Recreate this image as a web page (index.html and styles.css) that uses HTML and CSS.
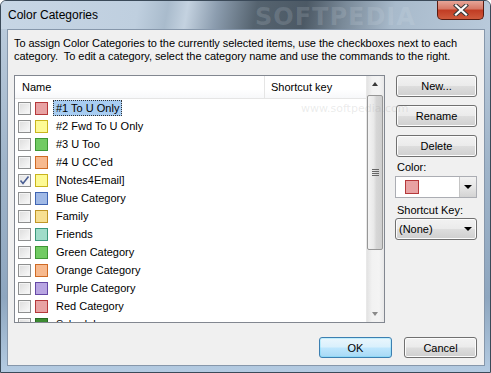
FILE: index.html
```html
<!DOCTYPE html>
<html lang="en">
<head>
<meta charset="UTF-8" />
<title>Color Categories</title>
<link rel="stylesheet" href="styles.css">
</head>
<body>

<div class="window">
  <div class="titlebar">
    <span class="title">Color Categories</span>
    <span class="watermark">SOFTPEDIA</span>
    <div class="close-btn">
      <svg width="16" height="12" viewBox="0 0 16 12">
        <path d="M3 1.5 L13 10.5 M13 1.5 L3 10.5" stroke="#3a3a3a" stroke-width="4.2" stroke-linecap="square"/>
        <path d="M3 1.5 L13 10.5 M13 1.5 L3 10.5" stroke="#fff" stroke-width="2.2" stroke-linecap="square"/>
      </svg>
    </div>
  </div>

  <div class="client">
    <p class="intro">To assign Color Categories to the currently selected items, use the checkboxes next to each<br>category.&nbsp; To edit a category, select the category name and use the commands to the right.</p>

    <div class="main">
      <div class="listbox">
        <div class="list-cols">
          <div class="list-head">
            <span class="col-name">Name</span>
            <span class="col-key">Shortcut key</span>
          </div>
          <ul class="rows" id="rows"></ul>
        </div>
        <div class="scrollbar">
          <div class="sb-arrow up"></div>
          <div class="sb-track">
            <div class="sb-thumb"><span class="grip"></span></div>
          </div>
          <div class="sb-arrow down"></div>
        </div>
      </div>

      <div class="side">
        <button class="btn">New...</button>
        <button class="btn">Rename</button>
        <button class="btn">Delete</button>
        <label class="field-label">Color:</label>
        <div class="color-combo">
          <span class="color-value"><span class="swatch red"></span></span>
          <span class="combo-arrow"></span>
        </div>
        <label class="field-label">Shortcut Key:</label>
        <div class="key-combo">
          <span>(None)</span>
          <span class="key-arrow"></span>
        </div>
      </div>
    </div>

    <div class="footer">
      <button class="btn btn-default">OK</button>
      <button class="btn">Cancel</button>
    </div>
  </div>

  <span class="wm wm-url">www.softpedia.com</span>
</div>

<script>
  const categorias = [
    { nombre: '#1 To U Only', color: 'red', sel: true },
    { nombre: '#2 Fwd To U Only', color: 'yellow' },
    { nombre: '#3 U Too', color: 'green' },
    { nombre: '#4 U CC\u2019ed', color: 'orange' },
    { nombre: '[Notes4Email]', color: 'yellow', checked: true },
    { nombre: 'Blue Category', color: 'blue' },
    { nombre: 'Family', color: 'peach' },
    { nombre: 'Friends', color: 'teal' },
    { nombre: 'Green Category', color: 'green' },
    { nombre: 'Orange Category', color: 'orange' },
    { nombre: 'Purple Category', color: 'purple' },
    { nombre: 'Red Category', color: 'red' },
    { nombre: 'Schedule', color: 'darkgreen' }
  ];

  const rowsEl = document.getElementById('rows');
  categorias.forEach(c => {
    const li = document.createElement('li');
    li.className = 'row';
    li.innerHTML = `
      <span class="check${c.checked ? ' checked' : ''}">${c.checked ? '<svg width="11" height="11" viewBox="0 0 11 11"><path d="M1.5 5.5 L4 8.5 L9.5 1.5" fill="none" stroke="#4b5f94" stroke-width="1.6"/></svg>' : ''}</span>
      <span class="swatch ${c.color}"></span>
      <span class="cat-name${c.sel ? ' selected' : ''}">${c.nombre}</span>
    `;
    rowsEl.appendChild(li);
  });
</script>

</body>
</html>
```

FILE: styles.css
```css
:root {
  --face: #f0f0f0;
  --ui-font: 'Liberation Sans', Arial, sans-serif;
}
body {
  margin: 0;
  padding: 0;
  width: 491px;
  height: 373px;
  overflow: hidden;
  font-family: var(--ui-font);
  font-size: 11px;
  color: #000;
}
.window {
  position: relative;
  width: 491px;
  height: 373px;
  box-sizing: border-box;
  display: flex;
  flex-direction: column;
  border: 1px solid #3b4a59;
  border-radius: 6px 6px 0 0;
  background: linear-gradient(to bottom, #bfcfdf 0%, #9fb4c9 45%, #8ea6bf 80%, #b4cbe2 100%);
  overflow: hidden;
}
.titlebar {
  position: relative;
  height: 28px;
  display: flex;
  align-items: center;
  background: linear-gradient(100deg, #c7d6e5 0%, #bfcfdf 28%, #a9bbcc 34%, #c4d2e0 38%, #8c9daf 44%, #55636f 52%, #4c5965 62%, #7a8a99 70%, #a8bacb 80%, #b9cadb 100%);
}
.title {
  padding-left: 7px;
  font-size: 12px;
  color: #000;
}
.watermark {
  position: absolute;
  left: 254px;
  top: 2px;
  font: bold 24px 'DejaVu Sans', sans-serif;
  letter-spacing: 1px;
  color: rgba(220, 228, 236, 0.16);
}
.close-btn {
  position: absolute;
  right: 6px;
  top: -1px;
  width: 47px;
  height: 20px;
  box-sizing: border-box;
  border: 1px solid #5a1b10;
  border-top: none;
  border-radius: 0 0 5px 5px;
  background: linear-gradient(to bottom, #e8ab9e 0%, #d77a68 45%, #c23d24 55%, #cf5a3c 100%);
  display: flex;
  align-items: center;
  justify-content: center;
}
.client {
  flex: 1;
  margin: 0 5px 6px 6px;
  border: 1px solid #8697ab;
  background: var(--face);
  padding: 0 7px 0 6px;
  display: flex;
  flex-direction: column;
}
.intro {
  margin: 7px 0 0;
  line-height: 13px;
  letter-spacing: -0.05px;
  white-space: nowrap;
}
.main {
  display: flex;
  margin-top: 12px;
  height: 248px;
}
.listbox {
  width: 371px;
  box-sizing: border-box;
  border: 1px solid #828790;
  background: #fff;
  display: flex;
  overflow: hidden;
}
.list-cols {
  flex: 1;
  overflow: hidden;
}
.list-head {
  height: 23px;
  box-sizing: border-box;
  display: flex;
  align-items: center;
  border-bottom: 1px solid #e5e5e5;
  background: linear-gradient(to bottom, #ffffff 0%, #ffffff 60%, #f7f8fa 100%);
}
.col-name {
  width: 250px;
  box-sizing: border-box;
  padding-left: 7px;
  line-height: 22px;
  border-right: 1px solid #e5e5e5;
}
.col-key {
  padding-left: 6px;
}
.rows {
  list-style: none;
  margin: 0;
  padding: 0;
}
.row {
  height: 18px;
  display: flex;
  align-items: center;
  padding-left: 3px;
}
.check {
  width: 13px;
  height: 13px;
  box-sizing: border-box;
  border: 1px solid #8e8f8f;
  background: linear-gradient(135deg, #dcdcdc 0%, #eeeeee 60%, #fbfbfb 100%);
  box-shadow: inset 0 0 0 1px #f4f4f4;
  display: flex;
  align-items: center;
  justify-content: center;
}
.check.checked {
  background: linear-gradient(135deg, #e2e2e2 0%, #f2f2f2 60%, #fdfdfd 100%);
}
.swatch {
  width: 13px;
  height: 13px;
  box-sizing: border-box;
  border: 1px solid;
  margin-left: 4px;
  display: inline-block;
}
.swatch.red { background: #e8a2a3; border-color: #b5383a; }
.swatch.yellow { background: #fdfa95; border-color: #c9b41d; }
.swatch.green { background: #71cb63; border-color: #3e9634; }
.swatch.orange { background: #f7b98e; border-color: #cf6a24; }
.swatch.blue { background: #a0b9e6; border-color: #3f64b2; }
.swatch.peach { background: #f7df91; border-color: #c09526; }
.swatch.teal { background: #a0dcc9; border-color: #3b977a; }
.swatch.purple { background: #b8a5e2; border-color: #6548a5; }
.swatch.darkgreen { background: #3d8c32; border-color: #2a6a22; }
.cat-name {
  margin-left: 5px;
  padding: 0 2px;
  line-height: 14px;
  border: 1px solid transparent;
  white-space: nowrap;
}
.cat-name.selected {
  background: #a8cdf2;
  border: 1px dotted #333;
}
.scrollbar {
  width: 17px;
  display: flex;
  flex-direction: column;
  background: linear-gradient(to right, #e3e3e3 0%, #f2f2f2 30%, #f4f4f4 70%, #e8e8e8 100%);
  border-left: 1px solid #e8e8e8;
}
.sb-arrow {
  height: 17px;
  position: relative;
}
.sb-arrow::after {
  content: '';
  position: absolute;
  left: 5px;
  border-left: 3.5px solid transparent;
  border-right: 3.5px solid transparent;
}
.sb-arrow.up::after {
  top: 6px;
  border-bottom: 4px solid #3a3a3a;
}
.sb-arrow.down::after {
  top: 7px;
  border-top: 4px solid #8a8a8a;
}
.sb-track {
  flex: 1;
  padding: 2px 1px 0 0;
}
.sb-thumb {
  height: 155px;
  box-sizing: border-box;
  border: 1px solid #979797;
  border-radius: 2px;
  background: linear-gradient(to right, #f3f3f3 0%, #e9e9e9 40%, #d6d6d6 60%, #cfcfcf 100%);
  display: flex;
  align-items: center;
  justify-content: center;
}
.grip {
  width: 7px;
  height: 7px;
  background: repeating-linear-gradient(to bottom, #666 0 1px, transparent 1px 2px);
}
.side {
  width: 82px;
  margin-left: 10px;
  display: flex;
  flex-direction: column;
}
.btn {
  font: 11px var(--ui-font);
  color: #000;
  height: 22px;
  box-sizing: border-box;
  border: 1px solid #707070;
  border-radius: 3px;
  background: linear-gradient(to bottom, #f2f2f2 0%, #ebebeb 48%, #dddddd 52%, #cfcfcf 100%);
  box-shadow: inset 0 0 0 1px #fcfcfc;
  padding: 0;
}
.side .btn {
  width: 81px;
  margin: 0 0 8px 1px;
}
.field-label {
  margin-top: -5px;
  line-height: 15px;
  padding-left: 2px;
}
.color-combo {
  margin-top: 1px;
  height: 22px;
  box-sizing: border-box;
  border: 1px solid #abadb3;
  background: #fff;
  display: flex;
}
.color-value {
  flex: 1;
  display: flex;
  align-items: center;
  padding-left: 5px;
}
.color-value .swatch {
  width: 14px;
  height: 14px;
}
.combo-arrow {
  width: 17px;
  box-sizing: border-box;
  border-left: 1px solid #c5c5c5;
  background: linear-gradient(to bottom, #f2f2f2 0%, #e6e6e6 50%, #d3d3d3 100%);
  position: relative;
}
.combo-arrow::after,
.key-arrow::after {
  content: '';
  position: absolute;
  left: 4px;
  top: 8px;
  border-left: 4px solid transparent;
  border-right: 4px solid transparent;
  border-top: 4px solid #000;
}
.color-combo + .field-label {
  margin-top: 5px;
}
.key-combo {
  margin-top: 0;
  height: 22px;
  box-sizing: border-box;
  border: 1px solid #707070;
  border-radius: 3px;
  background: linear-gradient(to bottom, #f2f2f2 0%, #ebebeb 48%, #dddddd 52%, #cfcfcf 100%);
  box-shadow: inset 0 0 0 1px #fcfcfc;
  display: flex;
  align-items: center;
  justify-content: space-between;
  padding-left: 3px;
}
.key-arrow {
  width: 16px;
  height: 20px;
  position: relative;
}
.footer {
  display: flex;
  justify-content: flex-end;
  gap: 12px;
  margin-top: 14px;
}
.footer .btn {
  width: 73px;
  height: 21px;
}
.btn-default {
  border-color: #3c7fb1;
  background: linear-gradient(to bottom, #eaf6fd 0%, #d9f0fc 48%, #bee6fd 52%, #a7d9f5 100%);
  box-shadow: inset 0 0 0 1px #48d6fb40;
}
.wm {
  position: absolute;
  font-family: 'DejaVu Sans', sans-serif;
  color: rgba(160, 160, 160, 0.22);
  pointer-events: none;
}
.wm-url {
  left: 300px;
  top: 101px;
  font-size: 11px;
}
```
